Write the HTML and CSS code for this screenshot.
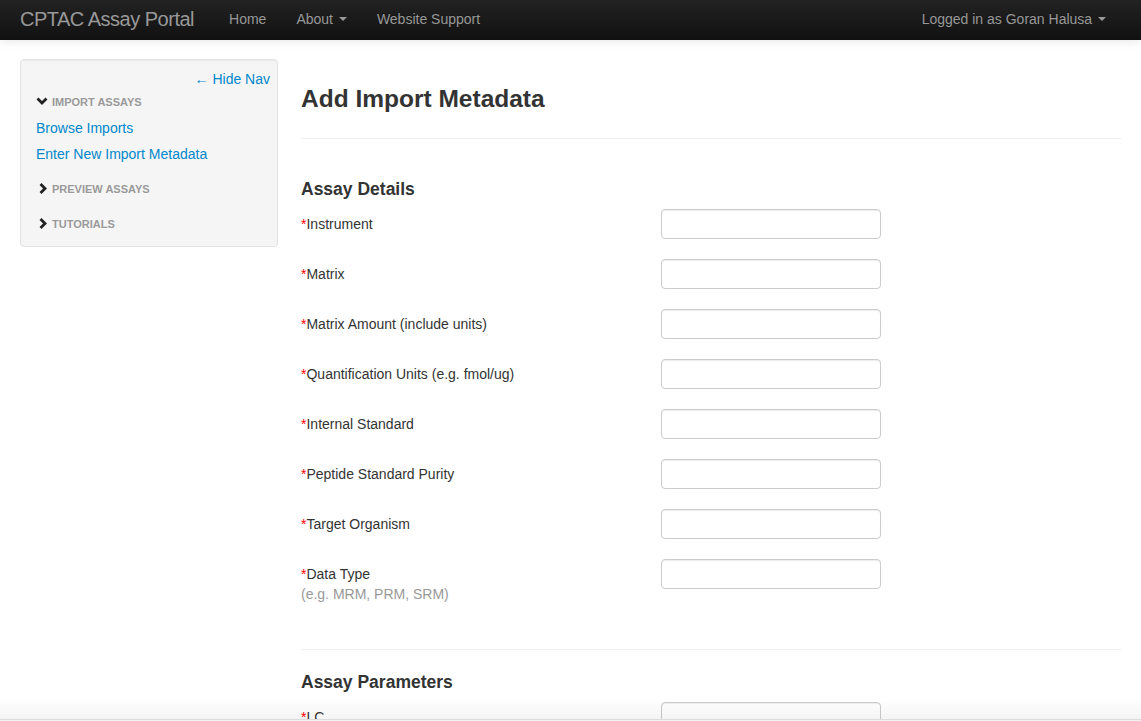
FILE: index.html
```html
<!DOCTYPE html>
<html lang="en">
<head>
<meta charset="utf-8">
<title>Add Import Metadata - CPTAC Assay Portal</title>
<link rel="stylesheet" href="styles.css">
</head>
<body>
<div class="navbar">
  <div class="navbar-inner">
    <a class="brand" href="#">CPTAC Assay Portal</a>
    <ul class="nav">
      <li><a href="#">Home</a></li>
      <li><a href="#">About <b class="caret"></b></a></li>
      <li><a href="#">Website Support</a></li>
    </ul>
    <ul class="nav nav-right">
      <li><a href="#">Logged in as Goran Halusa <b class="caret"></b></a></li>
    </ul>
  </div>
</div>

<div class="container">
  <aside class="sidebar">
    <div class="well">
      <div class="hide-nav"><a href="#">&larr; Hide Nav</a></div>
      <ul class="nav-list">
        <li class="nav-header">
          <svg class="chev" width="14" height="14" viewBox="0 0 14 14"><polyline points="2.5,4.5 6,8 9.5,4.5" fill="none" stroke="#222" stroke-width="2.8" stroke-linecap="square"/></svg>Import Assays
        </li>
        <li><a href="#">Browse Imports</a></li>
        <li><a href="#">Enter New Import Metadata</a></li>
        <li class="nav-header sub">
          <svg class="chev" width="14" height="14" viewBox="0 0 14 14"><polyline points="5.5,3 9,6.5 5.5,10" fill="none" stroke="#222" stroke-width="2.8" stroke-linecap="square"/></svg>Preview Assays
        </li>
        <li class="nav-header sub">
          <svg class="chev" width="14" height="14" viewBox="0 0 14 14"><polyline points="5.5,3 9,6.5 5.5,10" fill="none" stroke="#222" stroke-width="2.8" stroke-linecap="square"/></svg>Tutorials
        </li>
      </ul>
    </div>
  </aside>

  <main class="main">
    <h3 class="page-title">Add Import Metadata</h3>

    <form class="form-horizontal">
      <h4 class="section-title first">Assay Details</h4>
      <div class="control-group">
        <label class="control-label"><span class="req">*</span>Instrument</label>
        <div class="controls"><input type="text"></div>
      </div>
      <div class="control-group">
        <label class="control-label"><span class="req">*</span>Matrix</label>
        <div class="controls"><input type="text"></div>
      </div>
      <div class="control-group">
        <label class="control-label"><span class="req">*</span>Matrix Amount (include units)</label>
        <div class="controls"><input type="text"></div>
      </div>
      <div class="control-group">
        <label class="control-label"><span class="req">*</span>Quantification Units (e.g. fmol/ug)</label>
        <div class="controls"><input type="text"></div>
      </div>
      <div class="control-group">
        <label class="control-label"><span class="req">*</span>Internal Standard</label>
        <div class="controls"><input type="text"></div>
      </div>
      <div class="control-group">
        <label class="control-label"><span class="req">*</span>Peptide Standard Purity</label>
        <div class="controls"><input type="text"></div>
      </div>
      <div class="control-group">
        <label class="control-label"><span class="req">*</span>Target Organism</label>
        <div class="controls"><input type="text"></div>
      </div>
      <div class="control-group">
        <label class="control-label"><span class="req">*</span>Data Type<br><span class="hint">(e.g. MRM, PRM, SRM)</span></label>
        <div class="controls"><input type="text"></div>
      </div>

      <hr class="divider">

      <h4 class="section-title">Assay Parameters</h4>
      <div class="control-group">
        <label class="control-label"><span class="req">*</span>LC</label>
        <div class="controls"><input type="text"></div>
      </div>
    </form>
  </main>
</div>

<div class="bottom-fade"></div>
</body>
</html>
```

FILE: styles.css
```css
html {
  scrollbar-width: none;
}
html::-webkit-scrollbar {
  display: none;
}
body {
  margin: 0;
  font-family: "Liberation Sans", Arial, Helvetica, sans-serif;
  font-size: 14px;
  line-height: 20px;
  color: #333;
  background: #fff;
}
a {
  color: #0088cc;
  text-decoration: none;
}
ul {
  list-style: none;
  margin: 0;
  padding: 0;
}

/* Navbar */
.navbar {
  position: relative;
  z-index: 2;
  background: linear-gradient(to bottom, #222222, #111111);
  box-shadow: 0 1px 10px rgba(0, 0, 0, 0.1);
}
.navbar-inner {
  display: flex;
  align-items: center;
  height: 40px;
  padding: 0 20px;
}
.brand {
  color: #999;
  font-size: 20px;
  line-height: 20px;
  letter-spacing: -0.5px;
  padding: 9px 20px 11px 0;
}
.nav {
  display: flex;
}
.nav a {
  display: block;
  color: #999;
  padding: 9px 15px 11px;
  line-height: 20px;
  text-shadow: 0 -1px 0 rgba(0, 0, 0, 0.25);
}
.nav-right {
  margin-left: auto;
}
.caret {
  display: inline-block;
  width: 0;
  height: 0;
  margin-left: 2px;
  vertical-align: middle;
  border-top: 4px solid #999;
  border-left: 4px solid transparent;
  border-right: 4px solid transparent;
  position: relative;
  top: -1px;
}

/* Layout */
.container {
  display: grid;
  grid-template-columns: 258px 820px;
  column-gap: 23px;
  padding: 19px 20px 0;
}

/* Sidebar */
.well {
  background: #f5f5f5;
  border: 1px solid #e3e3e3;
  border-radius: 4px;
  box-shadow: inset 0 1px 1px rgba(0, 0, 0, 0.05);
  padding: 9px 0;
}
.hide-nav {
  text-align: right;
  padding-right: 7px;
  line-height: 20px;
}
.nav-list {
  padding: 0 15px;
}
.nav-list li a {
  display: block;
  padding: 3px 0;
  line-height: 20px;
}
.nav-header {
  display: flex;
  align-items: center;
  padding: 3px 0;
  font-size: 11px;
  font-weight: bold;
  line-height: 20px;
  color: #999;
  text-transform: uppercase;
  text-shadow: 0 1px 0 rgba(255, 255, 255, 0.5);
}
.nav-header.sub {
  margin-top: 9px;
}
.chev {
  flex: none;
  margin-right: 2px;
}

/* Main */
.page-title {
  margin: 20px 0 0;
  font-size: 24.5px;
  line-height: 40px;
  font-weight: bold;
  color: #333;
  padding-bottom: 19px;
  border-bottom: 1px solid #eee;
}
.form-horizontal {
  margin: 0;
}
.section-title {
  margin: 22px 0 10px;
  font-size: 17.5px;
  line-height: 20px;
  font-weight: bold;
  color: #333;
}
.section-title.first {
  margin-top: 40px;
}
.control-group {
  display: grid;
  grid-template-columns: 360px 1fr;
  margin-bottom: 20px;
}
.control-label {
  padding-top: 5px;
  line-height: 20px;
}
.req {
  color: #ff0000;
}
.hint {
  color: #999;
}
.controls input {
  display: block;
  box-sizing: content-box;
  width: 206px;
  height: 20px;
  padding: 4px 6px;
  margin: 0;
  font-family: inherit;
  font-size: 14px;
  border: 1px solid #ccc;
  border-radius: 4px;
  background: #fff;
  box-shadow: inset 0 1px 1px rgba(0, 0, 0, 0.075);
}
.divider {
  margin: 45px 0 0;
  border: 0;
  border-top: 1px solid #eee;
  height: 0;
}

/* Bottom edge */
.bottom-fade {
  position: fixed;
  left: 0;
  right: 0;
  bottom: 0;
  height: 22px;
  background: linear-gradient(to bottom,
    rgba(0, 0, 0, 0) 0,
    rgba(0, 0, 0, 0.045) 20px,
    #dcdcdc 20px,
    #dcdcdc 21px,
    #f2f2f2 21px);
}
```
